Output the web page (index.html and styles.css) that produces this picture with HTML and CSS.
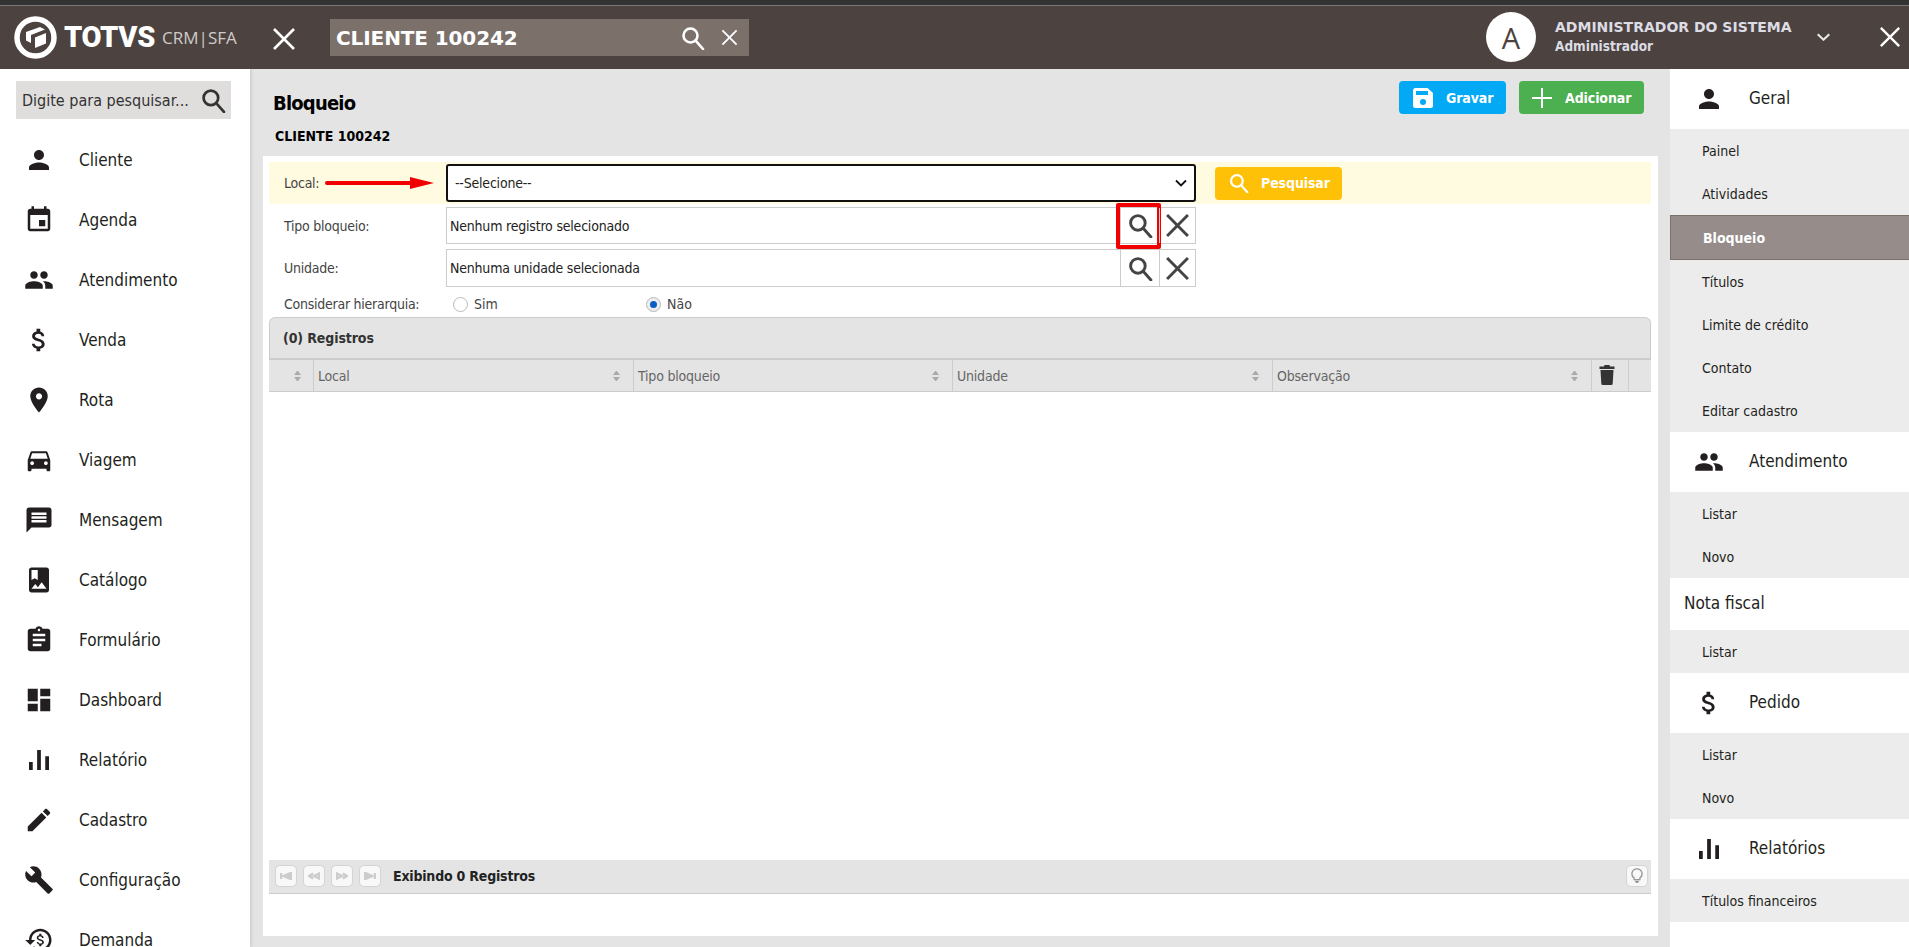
FILE: index.html
```html
<!DOCTYPE html>
<html lang="pt-BR">
<head>
    <meta charset="UTF-8">
    <title>Bloqueio - TOTVS CRM SFA</title>
    <link rel="stylesheet" href="styles.css">
</head>
<body>
    <svg class="icon-defs" width="0" height="0">
        <symbol id="i-person" viewBox="0 0 24 24"><path d="M12 12c2.21 0 4-1.79 4-4s-1.79-4-4-4-4 1.79-4 4 1.79 4 4 4zm0 2c-2.67 0-8 1.34-8 4v2h16v-2c0-2.66-5.33-4-8-4z"/></symbol>
        <symbol id="i-event" viewBox="0 0 24 24"><path d="M17 12h-5v5h5v-5zM16 1v2H8V1H6v2H5c-1.11 0-1.99.9-1.99 2L3 19c0 1.1.89 2 2 2h14c1.1 0 2-.9 2-2V5c0-1.1-.9-2-2-2h-1V1h-2zm3 18H5V8h14v11z"/></symbol>
        <symbol id="i-people" viewBox="0 0 24 24"><path d="M16 11c1.66 0 2.99-1.34 2.99-3S17.66 5 16 5c-1.66 0-3 1.34-3 3s1.34 3 3 3zm-8 0c1.66 0 2.99-1.34 2.99-3S9.66 5 8 5C6.34 5 5 6.34 5 8s1.34 3 3 3zm0 2c-2.33 0-7 1.17-7 3.5V19h14v-2.5c0-2.33-4.67-3.5-7-3.5zm8 0c-.29 0-.62.02-.97.05 1.16.84 1.97 1.97 1.97 3.45V19h6v-2.5c0-2.33-4.67-3.5-7-3.5z"/></symbol>
        <symbol id="i-money" viewBox="0 0 24 24"><path d="M11.8 10.9c-2.27-.59-3-1.2-3-2.15 0-1.09 1.01-1.85 2.7-1.85 1.78 0 2.44.85 2.5 2.1h2.21c-.07-1.72-1.12-3.3-3.21-3.81V3h-3v2.16c-1.94.42-3.5 1.68-3.5 3.61 0 2.31 1.91 3.46 4.7 4.13 2.5.6 3 1.48 3 2.41 0 .69-.49 1.79-2.7 1.79-2.06 0-2.87-.92-2.98-2.1h-2.2c.12 2.19 1.76 3.42 3.68 3.83V21h3v-2.15c1.95-.37 3.5-1.5 3.5-3.55 0-2.84-2.43-3.81-4.7-4.4z"/></symbol>
        <symbol id="i-place" viewBox="0 0 24 24"><path d="M12 2C8.13 2 5 5.13 5 9c0 5.25 7 13 7 13s7-7.75 7-13c0-3.87-3.13-7-7-7zm0 9.5c-1.38 0-2.5-1.12-2.5-2.5s1.12-2.5 2.5-2.5 2.5 1.12 2.5 2.5-1.12 2.5-2.5 2.5z"/></symbol>
        <symbol id="i-car" viewBox="0 0 24 24"><path d="M18.92 6.01C18.72 5.42 18.16 5 17.5 5h-11c-.66 0-1.21.42-1.42 1.01L3 12v8c0 .55.45 1 1 1h1c.55 0 1-.45 1-1v-1h12v1c0 .55.45 1 1 1h1c.55 0 1-.45 1-1v-8l-2.08-5.99zM6.5 16c-.83 0-1.5-.67-1.5-1.5S5.67 13 6.5 13s1.5.67 1.5 1.5S7.33 16 6.5 16zm11 0c-.83 0-1.5-.67-1.5-1.5s.67-1.5 1.5-1.5 1.5.67 1.5 1.5-.67 1.5-1.5 1.5zM5 11l1.5-4.5h11L19 11H5z"/></symbol>
        <symbol id="i-message" viewBox="0 0 24 24"><path d="M20 2H4c-1.1 0-1.99.9-1.99 2L2 22l4-4h14c1.1 0 2-.9 2-2V4c0-1.1-.9-2-2-2zm-2 12H6v-2h12v2zm0-3H6V9h12v2zm0-3H6V6h12v2z"/></symbol>
        <symbol id="i-album" viewBox="0 0 24 24"><path d="M18 2H6c-1.1 0-2 .9-2 2v16c0 1.1.9 2 2 2h12c1.1 0 2-.9 2-2V4c0-1.1-.9-2-2-2zM6 4h5v8l-2.5-1.5L6 12V4zm0 15l3-3.86 2.14 2.58 3-3.86L18 19H6z"/></symbol>
        <symbol id="i-assignment" viewBox="0 0 24 24"><path d="M19 3h-4.18C14.4 1.84 13.3 1 12 1c-1.3 0-2.4.84-2.82 2H5c-1.1 0-2 .9-2 2v14c0 1.1.9 2 2 2h14c1.1 0 2-.9 2-2V5c0-1.1-.9-2-2-2zm-7 0c.55 0 1 .45 1 1s-.45 1-1 1-1-.45-1-1 .45-1 1-1zm2 14H7v-2h7v2zm3-4H7v-2h10v2zm0-4H7V7h10v2z"/></symbol>
        <symbol id="i-dashboard" viewBox="0 0 24 24"><path d="M3 13h8V3H3v10zm0 8h8v-6H3v6zm10 0h8V11h-8v10zm0-18v6h8V3h-8z"/></symbol>
        <symbol id="i-chart" viewBox="0 0 24 24"><path d="M4 13.5h3V20H4zM10.5 4h3v16h-3zM17 9h3v11h-3z"/></symbol>
        <symbol id="i-edit" viewBox="0 0 24 24"><path d="M3 17.25V21h3.75L17.81 9.94l-3.75-3.75L3 17.25zM20.71 7.04c.39-.39.39-1.02 0-1.41l-2.34-2.34c-.39-.39-1.02-.39-1.41 0l-1.83 1.83 3.75 3.75 1.83-1.83z"/></symbol>
        <symbol id="i-build" viewBox="0 0 24 24"><path d="M22.7 19l-9.1-9.1c.9-2.3.4-5-1.5-6.9-2-2-5-2.4-7.4-1.3L9 6 6 9 1.6 4.7C.4 7.1.9 10.1 2.9 12.1c1.9 1.9 4.6 2.4 6.9 1.5l9.1 9.1c.4.4 1 .4 1.4 0l2.3-2.3c.5-.4.5-1.1.1-1.4z"/></symbol>
        <symbol id="i-demand" viewBox="0 0 24 24"><path d="M13 3c-4.97 0-9 4.03-9 9H1l3.89 3.89.07.14L9 12H6c0-3.87 3.13-7 7-7s7 3.13 7 7-3.13 7-7 7c-1.93 0-3.68-.79-4.94-2.06l-1.42 1.42C8.27 19.99 10.51 21 13 21c4.97 0 9-4.03 9-9s-4.03-9-9-9z"/><path d="M13.2 11.3c-1.3-.3-1.7-.7-1.7-1.2 0-.6.6-1 1.5-1 1 0 1.4.5 1.4 1.2h1.3c0-1-.6-1.8-1.8-2.1V7h-1.7v1.2c-1.1.2-2 .9-2 2 0 1.3 1.1 1.9 2.7 2.3 1.4.3 1.7.8 1.7 1.3 0 .4-.3 1-1.5 1-1.2 0-1.6-.5-1.7-1.2h-1.2c.1 1.2 1 1.9 2 2.1V17h1.7v-1.2c1.1-.2 2-.8 2-2 0-1.6-1.4-2.1-2.7-2.5z"/></symbol>
        <symbol id="i-search" viewBox="0 0 24 24"><circle cx="9.500" cy="9.500" r="7" fill="none" stroke="currentColor"/><path d="M14.600 14.600L22 23" fill="none" stroke="currentColor" stroke-linecap="round"/></symbol>
        <symbol id="i-close" viewBox="0 0 24 24"><path d="M2 2l20 20M22 2L2 22" fill="none" stroke="currentColor"/></symbol>
    </svg>

    <header class="topbar">
        <div class="brand">
            <svg class="brand-logo" viewBox="0 0 43 43">
                <circle cx="21.500" cy="21.500" r="18.500" fill="none" stroke="#fff" stroke-width="5.500"/>
                <path d="M12 16L26 11l5 2.500L17 19v8l-5-2.500zM21 21.500L32 17v10.500L21 32z" fill="#fff"/>
            </svg>
            <span class="brand-name">TOTVS</span>
            <span class="brand-product">CRM|SFA</span>
        </div>
        <svg class="topbar-menu"><use href="#i-close"/></svg>
        <div class="client-search">
            <span class="client-search-text">CLIENTE 100242</span>
            <svg class="client-search-find"><use href="#i-search"/></svg>
            <svg class="client-search-clear"><use href="#i-close"/></svg>
        </div>
        <div class="user-box">
            <div class="user-avatar">A</div>
            <div class="user-info">
                <div class="user-name">ADMINISTRADOR DO SISTEMA</div>
                <div class="user-role">Administrador</div>
            </div>
            <svg class="user-caret" viewBox="0 0 16 9"><path d="M1.500 1.500L8 7.500l6.500-6" fill="none" stroke="currentColor" stroke-width="2.400"/></svg>
            <svg class="topbar-close"><use href="#i-close"/></svg>
        </div>
    </header>

    <div class="layout">
        <aside class="sidebar">
            <div class="side-search">
                <span>Digite para pesquisar...</span>
                <svg class="side-search-icon"><use href="#i-search"/></svg>
            </div>
            <nav class="side-menu">
                <a class="side-item"><svg class="side-icon"><use href="#i-person"/></svg>Cliente</a>
                <a class="side-item"><svg class="side-icon"><use href="#i-event"/></svg>Agenda</a>
                <a class="side-item"><svg class="side-icon"><use href="#i-people"/></svg>Atendimento</a>
                <a class="side-item"><svg class="side-icon"><use href="#i-money"/></svg>Venda</a>
                <a class="side-item"><svg class="side-icon"><use href="#i-place"/></svg>Rota</a>
                <a class="side-item"><svg class="side-icon"><use href="#i-car"/></svg>Viagem</a>
                <a class="side-item"><svg class="side-icon"><use href="#i-message"/></svg>Mensagem</a>
                <a class="side-item"><svg class="side-icon"><use href="#i-album"/></svg>Catálogo</a>
                <a class="side-item"><svg class="side-icon"><use href="#i-assignment"/></svg>Formulário</a>
                <a class="side-item"><svg class="side-icon"><use href="#i-dashboard"/></svg>Dashboard</a>
                <a class="side-item"><svg class="side-icon"><use href="#i-chart"/></svg>Relatório</a>
                <a class="side-item"><svg class="side-icon"><use href="#i-edit"/></svg>Cadastro</a>
                <a class="side-item"><svg class="side-icon"><use href="#i-build"/></svg>Configuração</a>
                <a class="side-item"><svg class="side-icon"><use href="#i-demand"/></svg>Demanda</a>
            </nav>
        </aside>

        <main class="content">
            <div class="page-head">
                <div>
                    <h1 class="page-title">Bloqueio</h1>
                    <div class="page-sub">CLIENTE 100242</div>
                </div>
                <div class="page-actions">
                    <button class="btn btn-save">
                        <svg class="btn-icon" viewBox="0 0 20 20">
                            <path d="M2.500 0h12L20 5v12.500a2.500 2.500 0 0 1-2.500 2.500h-15A2.500 2.500 0 0 1 0 17.500v-15A2.500 2.500 0 0 1 2.500 0z" fill="#fff"/>
                            <rect x="3" y="3" width="12" height="4" fill="#03a9f4"/>
                            <circle cx="10" cy="14" r="3" fill="#03a9f4"/>
                        </svg>
                        Gravar
                    </button>
                    <button class="btn btn-add">
                        <svg class="btn-icon" viewBox="0 0 20 20"><path d="M10 0v20M0 10h20" fill="none" stroke="#fff" stroke-width="2"/></svg>
                        Adicionar
                    </button>
                </div>
            </div>

            <section class="card">
                <div class="form-row form-row-local">
                    <label class="form-label">Local:</label>
                    <svg class="red-arrow" viewBox="0 0 110 14"><path d="M3 5h83V1l24 6-24 6V9H3a2 2 0 0 1 0-4z" fill="#f00000"/></svg>
                    <div class="local-select">
                        <span>--Selecione--</span>
                        <svg class="select-caret" viewBox="0 0 12 8"><path d="M1 1.500l5 5 5-5" fill="none" stroke="#111" stroke-width="1.800"/></svg>
                    </div>
                    <button class="btn btn-find">
                        <svg class="btn-icon"><use href="#i-search"/></svg>
                        Pesquisar
                    </button>
                </div>

                <div class="form-row form-row-lookup">
                    <label class="form-label">Tipo bloqueio:</label>
                    <div class="lookup">
                        <span class="lookup-value">Nenhum registro selecionado</span>
                        <span class="lookup-btn lookup-btn-find lookup-btn-marked"><svg class="lookup-icon"><use href="#i-search"/></svg></span>
                        <span class="lookup-btn"><svg class="lookup-icon"><use href="#i-close"/></svg></span>
                    </div>
                </div>

                <div class="form-row form-row-lookup form-row-lookup-last">
                    <label class="form-label">Unidade:</label>
                    <div class="lookup">
                        <span class="lookup-value">Nenhuma unidade selecionada</span>
                        <span class="lookup-btn lookup-btn-find"><svg class="lookup-icon"><use href="#i-search"/></svg></span>
                        <span class="lookup-btn"><svg class="lookup-icon"><use href="#i-close"/></svg></span>
                    </div>
                </div>

                <div class="form-row form-row-radio">
                    <label class="form-label">Considerar hierarquia:</label>
                    <div class="radio radio-sim"><span class="radio-dot"></span>Sim</div>
                    <div class="radio"><span class="radio-dot radio-dot-on"></span>Não</div>
                </div>

                <div class="grid-title">(0) Registros</div>
                <div class="grid-head">
                    <div class="col col-check"><span class="sort"></span></div>
                    <div class="col col-local">Local<span class="sort"></span></div>
                    <div class="col col-tipo">Tipo bloqueio<span class="sort"></span></div>
                    <div class="col col-unid">Unidade<span class="sort"></span></div>
                    <div class="col col-obs">Observação<span class="sort"></span></div>
                    <div class="col col-trash">
                        <svg class="trash" viewBox="0 0 16 20">
                            <path d="M5.500 0h5l.5 1.500h4.500V4H.5V1.500H5zM1.500 5h13l-.8 13.500a1.500 1.500 0 0 1-1.500 1.500H3.800a1.500 1.500 0 0 1-1.500-1.500z" fill="#333"/>
                        </svg>
                    </div>
                    <div class="col col-end"></div>
                </div>
                <div class="grid-body"></div>
                <div class="grid-foot">
                    <span class="pager-btn"><svg viewBox="0 0 12 8"><path d="M1 1v6M11 1v6L4 4z" fill="#ccc" stroke="#ccc"/></svg></span>
                    <span class="pager-btn"><svg viewBox="0 0 14 8"><path d="M6 1L1 4l5 3M13 1v6L7 4z" fill="none" stroke="#ccc"/></svg></span>
                    <span class="pager-btn"><svg viewBox="0 0 14 8"><path d="M1 1v6l6-3zM8 1l5 3-5 3" fill="none" stroke="#ccc"/></svg></span>
                    <span class="pager-btn"><svg viewBox="0 0 12 8"><path d="M1 1v6l7-3zM11 1v6" fill="#ccc" stroke="#ccc"/></svg></span>
                    <span class="pager-text">Exibindo 0 Registros</span>
                    <span class="pager-btn pager-tip">
                        <svg viewBox="0 0 14 18"><path d="M7 1a6 6 0 0 0-3.500 10.900V14h7v-2.100A6 6 0 0 0 7 1zM4.500 16h5M5.500 17.500h3" fill="none" stroke="#999" stroke-width="1.600"/></svg>
                    </span>
                </div>
            </section>
        </main>

        <aside class="rightbar">
            <div class="right-head"><svg class="right-icon"><use href="#i-person"/></svg>Geral</div>
            <div class="right-sub">
                <a class="right-link">Painel</a>
                <a class="right-link">Atividades</a>
                <a class="right-link right-link-active">Bloqueio</a>
                <a class="right-link">Títulos</a>
                <a class="right-link">Limite de crédito</a>
                <a class="right-link">Contato</a>
                <a class="right-link">Editar cadastro</a>
            </div>
            <div class="right-head"><svg class="right-icon"><use href="#i-people"/></svg>Atendimento</div>
            <div class="right-sub">
                <a class="right-link">Listar</a>
                <a class="right-link">Novo</a>
            </div>
            <div class="right-head right-head-plain">Nota fiscal</div>
            <div class="right-sub">
                <a class="right-link">Listar</a>
            </div>
            <div class="right-head"><svg class="right-icon"><use href="#i-money"/></svg>Pedido</div>
            <div class="right-sub">
                <a class="right-link">Listar</a>
                <a class="right-link">Novo</a>
            </div>
            <div class="right-head"><svg class="right-icon"><use href="#i-chart"/></svg>Relatórios</div>
            <div class="right-sub">
                <a class="right-link">Títulos financeiros</a>
            </div>
        </aside>
    </div>
</body>
</html>
```

FILE: styles.css
```css
* {
    margin: 0;
    padding: 0;
    box-sizing: border-box;
}

html, body {
    height: 100%;
    overflow: hidden;
}

body {
    font-family: "DejaVu Sans", "Noto Sans", sans-serif;
    font-stretch: condensed;
    font-size: 14px;
    color: #231f20;
    background: #e4e4e4;
}

.icon-defs {
    position: absolute;
}

svg {
    display: block;
    flex: none;
    fill: currentColor;
    stroke-width: 2.6;
}

/* top bar */
.topbar {
    height: 69px;
    background: #4c4340;
    border-top: 5px solid #333;
    box-shadow: inset 0 1px 0 #777;
    display: flex;
    align-items: center;
    color: #fff;
}

.brand {
    width: 272px;
    padding-left: 14px;
    display: flex;
    align-items: center;
}

.brand-logo {
    width: 43px;
    height: 43px;
    margin-right: 7px;
}

.brand-name {
    font-family: Roboto, sans-serif;
    font-stretch: normal;
    font-size: 29px;
    font-weight: 900;
    letter-spacing: -0.3px;
}

.brand-product {
    margin-left: 7px;
    font-family: "Open Sans", sans-serif;
    font-stretch: normal;
    font-size: 17px;
    color: #cfcbca;
}

.topbar-menu {
    width: 24px;
    height: 24px;
    margin-top: 4px;
    margin-right: 34px;
}

.client-search {
    width: 419px;
    height: 37px;
    margin-top: 1px;
    padding: 0 10px 0 6px;
    background: #7c706b;
    display: flex;
    align-items: center;
}

.client-search-text {
    flex: 1;
    font-size: 20px;
    font-weight: 700;
    font-stretch: normal;
    letter-spacing: -0.1px;
}

.client-search-find {
    width: 24px;
    height: 24px;
    margin-right: 15px;
}

.client-search-clear {
    width: 19px;
    height: 17px;
}

.user-box {
    margin-left: auto;
    display: flex;
    align-items: center;
}

.user-avatar {
    width: 50px;
    height: 50px;
    border-radius: 50%;
    background: #fff;
    color: #4c4340;
    font-family: "Open Sans", sans-serif;
    font-stretch: normal;
    font-size: 29px;
    display: flex;
    align-items: center;
    justify-content: center;
}

.user-info {
    width: 261px;
    margin-left: 19px;
    color: #dcdce4;
    font-weight: 700;
}

.user-name {
    font-size: 14px;
    font-stretch: normal;
    line-height: 19px;
}

.user-role {
    font-size: 13.500px;
    line-height: 19px;
}

.user-caret {
    width: 15px;
    height: 8px;
    margin-right: 48px;
    color: #e8e8e8;
}

.topbar-close {
    width: 22px;
    height: 22px;
    margin-right: 8px;
}

/* page columns */
.layout {
    height: 878px;
    display: flex;
    overflow: hidden;
}

/* left menu */
.sidebar {
    width: 250px;
    flex: none;
    background: #fff;
    box-shadow: 2px 0 2px #d0d0d0;
    padding-top: 12px;
}

.side-search {
    width: 215px;
    height: 38px;
    margin-left: 16px;
    padding: 0 5px 0 6px;
    background: #e0dedd;
    font-size: 16px;
    color: #333;
    display: flex;
    align-items: center;
    justify-content: space-between;
}

.side-search-icon {
    width: 25px;
    height: 25px;
}

.side-menu {
    margin-top: 11px;
}

.side-item {
    height: 60px;
    font-size: 17px;
    display: flex;
    align-items: center;
}

.side-icon {
    width: 30px;
    height: 30px;
    margin: 0 25px 0 24px;
}

/* center */
.content {
    flex: 1;
    padding: 0 12px 11px 13px;
    display: flex;
    flex-direction: column;
}

.page-head {
    height: 87px;
    padding: 12px 14px 0 10px;
    display: flex;
    justify-content: space-between;
    align-items: flex-start;
}

.page-title {
    margin-top: 10px;
    font-size: 20px;
    line-height: 25px;
    letter-spacing: -0.8px;
    color: #000;
}

.page-sub {
    margin-top: 12px;
    margin-left: 2px;
    font-size: 14px;
    font-weight: 700;
    color: #000;
}

.page-actions {
    display: flex;
    gap: 13px;
}

.btn {
    height: 33px;
    border: none;
    border-radius: 4px;
    color: #fff;
    font-family: inherit;
    font-stretch: condensed;
    font-size: 14px;
    font-weight: 700;
    letter-spacing: -0.1px;
    display: flex;
    align-items: center;
}

.btn-icon {
    width: 20px;
    height: 20px;
}

.btn-save {
    width: 107px;
    padding-left: 14px;
    gap: 13px;
    background: #03a9f4;
}

.btn-add {
    width: 125px;
    padding-left: 13px;
    gap: 13px;
    background: #4caf50;
}

.btn-find {
    width: 127px;
    padding-left: 14px;
    gap: 12px;
    background: #ffc107;
    margin-left: 19px;
}

.card {
    flex: 1;
    min-height: 0;
    background: #fff;
    padding: 6px 7px 42px 6px;
    display: flex;
    flex-direction: column;
}

/* form */
.form-row {
    display: flex;
    align-items: center;
    position: relative;
}

.form-label {
    width: 177px;
    padding-left: 15px;
    color: #444;
    letter-spacing: -0.25px;
    flex: none;
}

.form-row-local {
    height: 42px;
    background: #fffbe0;
}

.red-arrow {
    position: absolute;
    left: 55px;
    top: 14px;
    width: 110px;
    height: 14px;
}

.local-select {
    width: 750px;
    height: 38px;
    padding: 0 7px;
    background: #fff;
    border: 2px solid #111;
    border-radius: 3px;
    letter-spacing: -0.2px;
    display: flex;
    align-items: center;
    justify-content: space-between;
}

.select-caret {
    width: 12px;
    height: 8px;
}

.form-row-lookup {
    height: 37px;
    margin-top: 3px;
}

.form-row-lookup-last {
    height: 38px;
    margin-top: 5px;
}

.lookup {
    width: 750px;
    height: 100%;
    border: 1px solid #ccc;
    display: flex;
    align-items: center;
}

.lookup-value {
    flex: 1;
    padding-left: 3px;
    color: #222;
    letter-spacing: -0.2px;
}

.lookup-btn {
    width: 36px;
    height: 100%;
    display: flex;
    align-items: center;
    justify-content: center;
    position: relative;
    border-left: 1px solid #ccc;
    color: #444;
}

.lookup-btn-find {
    width: 39px;
}

.lookup-btn-marked::after {
    content: "";
    position: absolute;
    left: -5px;
    right: -2px;
    top: -5px;
    bottom: -6px;
    border: 4px solid #f00000;
    border-radius: 2px;
}

.lookup-icon {
    width: 25px;
    height: 25px;
    stroke-width: 2.800;
}

.form-row-radio {
    height: 30px;
    padding-top: 4px;
}

.radio {
    display: flex;
    align-items: center;
    gap: 6px;
    color: #444;
}

.radio-sim {
    width: 193px;
    margin-left: 7px;
}

.radio-dot {
    width: 15px;
    height: 15px;
    border-radius: 50%;
    background: #fff;
    border: 1px solid #bbb;
}

.radio-dot-on {
    border: 4px solid #eee;
    outline: 1px solid #bbb;
    outline-offset: -1px;
    background: #0a5fc4;
}

/* records grid */
.grid-title {
    height: 43px;
    padding-left: 13px;
    background: #e4e4e4;
    border: 1px solid #ccc;
    border-bottom-width: 2px;
    border-radius: 6px 6px 0 0;
    font-weight: 700;
    color: #333;
    letter-spacing: -0.1px;
    display: flex;
    align-items: center;
}

.grid-head {
    height: 32px;
    background: #e4e4e4;
    border-bottom: 1px solid #ccc;
    color: #666;
    letter-spacing: -0.2px;
    display: flex;
}

.col {
    padding-left: 4px;
    border-right: 1px solid #ccc;
    display: flex;
    align-items: center;
    justify-content: space-between;
}

.col-check {
    width: 45px;
    padding-right: 12px;
    justify-content: flex-end;
}

.col-local,
.col-unid {
    width: 320px;
    padding-right: 13px;
}

.col-tipo,
.col-obs {
    width: 319px;
    padding-right: 13px;
}

.col-trash {
    width: 37px;
    padding-left: 7px;
}

.col-end {
    flex: 1;
    border-right: none;
}

.sort {
    width: 7px;
    display: flex;
    flex-direction: column;
    gap: 2px;
}

.sort::before,
.sort::after {
    content: "";
    border-left: 3.500px solid transparent;
    border-right: 3.500px solid transparent;
}

.sort::before {
    border-bottom: 4px solid #aaa;
}

.sort::after {
    border-top: 4px solid #aaa;
}

.trash {
    width: 16px;
    height: 20px;
    margin-top: -1px;
}

.grid-body {
    flex: 1;
}

.grid-foot {
    height: 34px;
    padding: 0 3px 2px 6px;
    background: #e4e4e4;
    border-bottom: 1px solid #ccc;
    display: flex;
    align-items: center;
    gap: 6px;
}

.pager-btn {
    width: 22px;
    height: 22px;
    background: #f8f8f8;
    border: 1px solid #d4d4d4;
    border-radius: 5px;
    display: flex;
    align-items: center;
    justify-content: center;
}

.pager-btn svg {
    width: 12px;
    height: 8px;
}

.pager-text {
    margin-left: 6px;
    font-weight: 700;
    letter-spacing: -0.2px;
    color: #222;
}

.pager-tip {
    margin-left: auto;
}

.pager-tip svg {
    width: 12px;
    height: 15px;
}

/* right menu */
.rightbar {
    width: 239px;
    flex: none;
    background: #fff;
}

.right-head {
    height: 60px;
    padding-bottom: 2px;
    font-size: 17px;
    display: flex;
    align-items: center;
}

.right-head-plain {
    height: 52px;
    padding-left: 14px;
}

.right-icon {
    width: 30px;
    height: 30px;
    margin: 2px 25px 0 24px;
}

.right-sub {
    background: #ececec;
}

.right-link {
    height: 43px;
    padding: 1px 0 0 32px;
    font-size: 14px;
    display: flex;
    align-items: center;
}

.right-link-active {
    height: 45px;
    background: #968d8b;
    border: 1px solid #7c706b;
    border-right: none;
    font-weight: 700;
    color: #fff;
}
```
